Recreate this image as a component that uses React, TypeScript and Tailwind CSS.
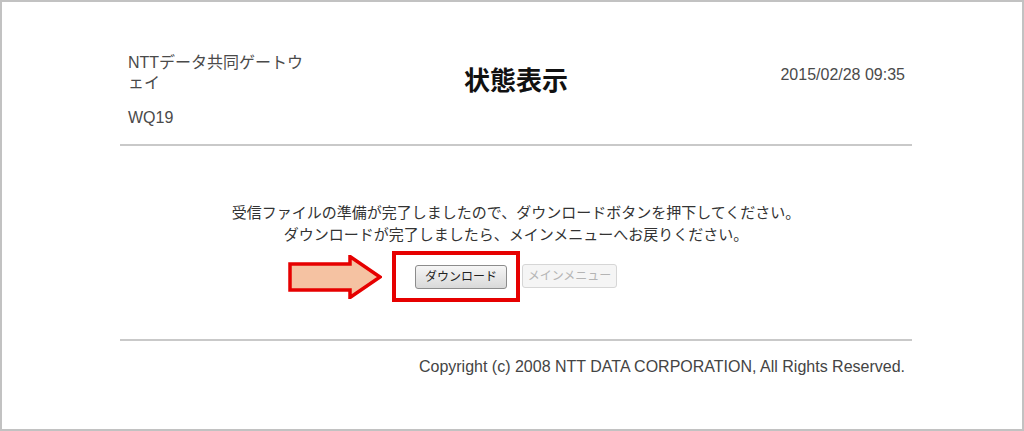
import React from "react";

const font = {
  fontFamily: '"Liberation Sans", "Noto Sans CJK JP", sans-serif',
};

function Arrow() {
  return (
    <svg width="94" height="44" viewBox="0 0 94 44" className="absolute left-[-127px] top-[-9px]">
      <path
        d="M2 9 H62 V1.5 L92 22 L62 42.5 V35 H2 Z"
        fill="#f5c2a2"
        stroke="#e60000"
        strokeWidth="3.5"
        strokeLinejoin="miter"
      />
    </svg>
  );
}

export default function App() {
  return (
    <div
      className="w-[1024px] h-[431px] border-2 border-[#c2c2c2] bg-white overflow-hidden"
      style={font}
    >
      <div className="ml-[118px] w-[792px] flex flex-col">
        {/* header */}
        <header className="grid grid-cols-[1fr_auto_1fr] pt-[51px] pb-[16px]">
          <div className="pl-[8px] text-[16px] leading-[20px] text-[#4a4a4a]">
            <div>
              NTTデータ共同ゲートウ
              <br />
              ェイ
            </div>
            <div className="mt-[15px]">WQ19</div>
          </div>
          <h1 className="mt-[12px] text-[26px] leading-[32px] font-bold text-[#111]">状態表示</h1>
          <div className="mt-[12px] pr-[7px] text-right text-[16px] leading-[20px] text-[#4a4a4a]">
            2015/02/28 09:35
          </div>
        </header>
        <div className="h-[2px] bg-[#c9c9c9]" />

        {/* message */}
        <div className="mt-[56px] text-center text-[15px] leading-[22px] text-[#333]">
          <p>受信ファイルの準備が完了しましたので、ダウンロードボタンを押下してください。</p>
          <p>ダウンロードが完了しましたら、メインメニューへお戻りください。</p>
        </div>

        <div className="mt-[18px] flex justify-center gap-[15px]">
          <div className="relative">
            <Arrow />
            <div className="absolute left-[-23px] top-[-13px] w-[128px] h-[51px] border-4 border-[#e60000]" />
            <button className="relative w-[92px] h-[24px] rounded-[3px] border border-[#8c8c8c] bg-gradient-to-b from-[#f6f6f6] to-[#d9d9d9] text-[12px] text-[#222]">
              ダウンロード
            </button>
          </div>
          <button
            disabled
            className="w-[95px] h-[24px] rounded-[3px] border border-[#d6d6d6] bg-[#f5f5f5] text-[12px] text-[#b4b4b4]"
          >
            メインメニュー
          </button>
        </div>

        <div className="mt-[50px] h-[2px] bg-[#c9c9c9]" />

        <footer className="mt-[16px] pr-[7px] text-right text-[16px] leading-[20px] text-[#444]">
          Copyright (c) 2008 NTT DATA CORPORATION, All Rights Reserved.
        </footer>
      </div>
    </div>
  );
}
